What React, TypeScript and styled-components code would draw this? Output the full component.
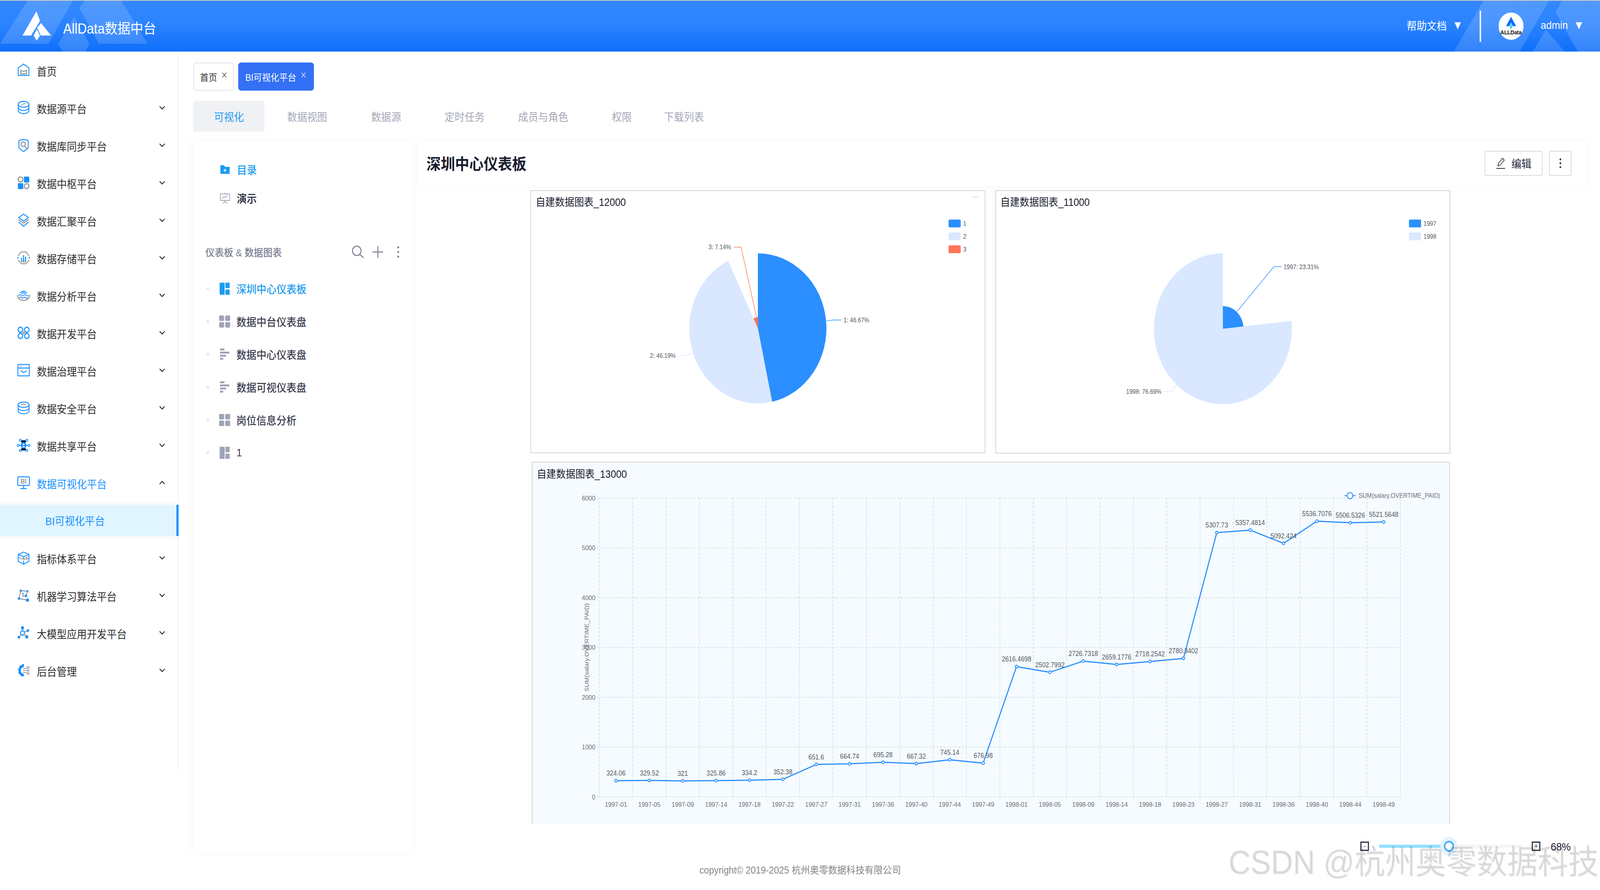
import React from "react";
import styled, { createGlobalStyle } from "styled-components";

const FONT = `"Liberation Sans", "Noto Sans CJK SC", sans-serif`;
const B = "#1890ff";
const G = "#999";

const Global = createGlobalStyle`
  html, body { margin: 0; padding: 0; background: #fff; overflow: hidden; }
  body { font-family: ${FONT}; height: 2278px; }
  * { box-sizing: border-box; }
`;

const Page = styled.div`
  position: relative;
  width: 4480px;
  height: 2278px;
  display: flex;
  flex-direction: column;
  overflow: hidden;
  background: #fff;
  transform-origin: 0 0;
`;

/* ---------- header ---------- */
const Header = styled.header`
  position: relative;
  flex: none;
  height: 132px;
  border-top: 2px solid #c9c9c9;
  background: linear-gradient(180deg, #3288ff 0%, #2b83ff 45%, #0f6ffa 100%);
  display: flex;
  align-items: center;
  justify-content: space-between;
  color: #fff;
  overflow: hidden;
`;
const HeaderDecor = styled.svg`
  position: absolute;
  left: 0;
  top: -2px;
  width: 4480px;
  height: 132px;
`;
const Brand = styled.div`
  position: relative;
  display: flex;
  align-items: center;
  padding-left: 60px;
`;
const BrandName = styled.div`
  font-size: 36px;
  margin-left: 31px;
  margin-top: 6px;
`;
const HeaderRight = styled.div`
  position: relative;
  display: flex;
  align-items: center;
  padding-right: 50px;
  font-size: 28px;
`;
const HeaderLink = styled.span`
  margin-top: -4px;
`;
const Caret = styled.i`
  display: block;
  width: 18px;
  height: 18px;
  margin: -2px 0 0 ${(p: { $ml: number }) => p.$ml}px;
  background: #fff;
  clip-path: polygon(0 0, 100% 0, 50% 100%);
`;
const HeaderRule = styled.div`
  width: 4px;
  height: 80px;
  background: #fff;
  margin: 0 49px 0 52px;
`;
const Avatar = styled.svg`
  width: 70px;
  height: 70px;
  flex: none;
  margin-right: 48px;
`;

/* ---------- layout ---------- */
const Body = styled.div`
  flex: 1;
  display: flex;
  min-height: 0;
`;
const Sidebar = styled.nav`
  flex: none;
  width: 500px;
  height: 1840px;
  border-right: 2px solid #f0f0f0;
`;
const MenuRow = styled.div<{ $active?: boolean }>`
  height: 96px;
  display: flex;
  align-items: center;
  padding-left: 48px;
  font-size: 28px;
  color: ${(p) => (p.$active ? B : "#2e2e2e")};
`;
const MenuLabel = styled.span`
  margin-left: 19px;
  flex: 1;
  margin-top: 4px;
`;
const MenuChevron = styled.svg`
  width: 16px;
  height: 9px;
  margin-right: 36px;
  margin-top: -2px;
  flex: none;
`;
const MenuIcon = styled.svg`
  width: 36px;
  height: 36px;
  flex: none;
  overflow: visible;
`;
const SubWrap = styled.div`
  height: 96px;
  padding: 8px 0;
  background: #fafafa;
`;
const SubItem = styled.div`
  height: 80px;
  background: #e0f5ff;
  border-right: 6px solid ${B};
  margin-right: -2px;
  display: flex;
  align-items: center;
  padding-left: 127px;
  color: ${B};
  font-size: 28px;
`;
const Main = styled.main`
  flex: 1;
  min-width: 0;
  padding: 28px 0 0 41px;
  display: flex;
  flex-direction: column;
`;

/* ---------- tags + tabs ---------- */
const TagBar = styled.div`
  display: flex;
  gap: 12px;
  height: 72px;
  flex: none;
`;
const Tag = styled.div<{ $active?: boolean }>`
  height: 72px;
  display: flex;
  align-items: center;
  padding: 0 ${(p) => (p.$active ? 20 : 18)}px 0 ${(p) => (p.$active ? 18 : 17)}px;
  border-radius: 8px;
  font-size: 24px;
  border: 2px solid ${(p) => (p.$active ? "#3370f5" : "#dfe3ea")};
  background: ${(p) => (p.$active ? "#3370f5" : "#fff")};
  color: ${(p) => (p.$active ? "#fff" : "#333")};
`;
const TagClose = styled.svg`
  width: 14px;
  height: 14px;
  margin: -8px 0 0 13px;
`;
const TabBar = styled.div`
  display: flex;
  flex: none;
  margin-top: 11px;
  padding-top: 15px;
  height: 98px;
  border-left: 1px solid #f0f0f0;
`;
const Tab = styled.div<{ $w: number; $active?: boolean }>`
  flex: none;
  width: ${(p) => p.$w}px;
  height: 79px;
  display: flex;
  align-items: center;
  justify-content: center;
  white-space: nowrap;
  font-size: 28px;
  border-radius: 6px 6px 0 0;
  background: ${(p) => (p.$active ? "#f0f1f5" : "transparent")};
  color: ${(p) => (p.$active ? "#1d9bf0" : "#a4a7b8")};
`;
const Workspace = styled.div`
  display: flex;
  flex: none;
  margin-top: 21px;
  gap: 15px;
`;

/* ---------- left panel ---------- */
const Panel = styled.aside`
  flex: none;
  width: 614px;
  height: 1818px;
  background: #fff;
  box-shadow: 0 0 26px 6px rgba(0, 0, 0, 0.025);
  padding: 54px 0 0 34px;
`;
const PanelLink = styled.div<{ $active?: boolean }>`
  display: flex;
  align-items: center;
  height: 36px;
  margin: 0 0 37px 41px;
  font-size: 28px;
  font-weight: 500;
  color: ${(p) => (p.$active ? "#1d9bf0" : "#1b1d30")};
`;
const PanelLinkIcon = styled.svg`
  width: 28px;
  height: 28px;
  margin-right: 19px;
  flex: none;
`;
const SectionHead = styled.div`
  display: flex;
  align-items: center;
  margin-top: 99px;
  height: 40px;
  color: #7a7d92;
  font-size: 26px;
  font-weight: 500;
`;
const SectionTitle = styled.span`
  flex: 1;
`;
const SectionTools = styled.svg`
  width: 150px;
  height: 40px;
  margin-right: 31px;
  flex: none;
`;
const Tree = styled.div`
  margin-top: 33px;
`;
const TreeRow = styled.div<{ $active?: boolean }>`
  height: 84px;
  display: flex;
  align-items: center;
  font-size: 28px;
  font-weight: 500;
  color: ${(p) => (p.$active ? "#1d9bf0" : "#3c3e50")};
`;
const TreeDot = styled.i`
  width: 8px;
  height: 8px;
  border-radius: 50%;
  background: #e8e9f2;
  margin: 0 27px 0 3px;
  flex: none;
`;
const TreeIcon = styled.svg`
  width: 32px;
  height: 32px;
  margin-right: 17px;
  flex: none;
`;

/* ---------- board ---------- */
const Board = styled.section`
  flex: none;
  width: 3270px;
  display: flex;
  flex-direction: column;
`;
const TitleBar = styled.div`
  height: 112px;
  flex: none;
  background: #fff;
  box-shadow: 0 0 26px 6px rgba(0, 0, 0, 0.025);
  display: flex;
  align-items: center;
  padding: 0 40px 0 24px;
`;
const BoardTitle = styled.h1`
  flex: 1;
  margin: 0 0 2px;
  font-size: 40px;
  font-weight: 700;
  color: #1b1d30;
`;
const ToolButton = styled.div<{ $w: number }>`
  width: ${(p) => p.$w}px;
  height: 64px;
  border: 2px solid #d9d9d9;
  border-radius: 4px;
  display: flex;
  align-items: center;
  justify-content: center;
  gap: 16px;
  margin-left: 18px;
  font-size: 28px;
  color: #2a2c40;
`;
const ToolIcon = styled.svg`
  width: 28px;
  height: 36px;
  flex: none;
`;
const DotsIcon = styled.svg`
  width: 10px;
  height: 36px;
  flex: none;
`;
const Canvas = styled.div`
  margin-top: 13px;
  padding-left: 315px;
  display: flex;
  flex-direction: column;
  gap: 21px;
  position: relative;
`;
const ChartRow = styled.div`
  display: flex;
  gap: 28px;
`;
const ChartCard = styled.div<{ $tint?: boolean; $w: number; $h: number; $open?: boolean }>`
  width: ${(p) => p.$w}px;
  height: ${(p) => p.$h}px;
  margin-left: ${(p) => (p.$tint ? 4 : 0)}px;
  background: ${(p) => (p.$tint ? "#f5fbff" : "#fff")};
  border: 2px solid #d2d4d6;
  border-bottom-width: ${(p) => (p.$open ? 0 : 2)}px;
  flex: none;
  position: relative;
`;
const CardDots = styled.span`
  position: absolute;
  right: 18px;
  top: 2px;
  font-size: 16px;
  letter-spacing: 1px;
  color: ${B};
`;
const ChartTitle = styled.div<{ $h: number; $pl: number }>`
  height: ${(p) => p.$h}px;
  padding-left: ${(p) => p.$pl}px;
  display: flex;
  align-items: center;
  font-size: 27px;
  color: #1b1d30;
`;
const ChartSvg = styled.svg`
  display: block;
`;
const LabelText = styled.text`
  font-family: "Liberation Sans", sans-serif;
  font-size: 16px;
  fill: #555a63;
`;
const TickText = styled.text<{ $size?: number }>`
  font-family: "Liberation Sans", sans-serif;
  font-size: ${(p) => p.$size ?? 17}px;
  fill: #6e7079;
`;
const ValueText = styled.text`
  font-family: "Liberation Sans", sans-serif;
  font-size: 17.5px;
  fill: #555a63;
  text-anchor: middle;
`;

/* ---------- zoom bar + footer ---------- */
const ZoomBar = styled.div`
  margin-top: 41px;
  height: 30px;
  padding-right: 40px;
  display: flex;
  align-items: center;
  justify-content: flex-end;
  font-size: 28px;
  color: #1b1d30;
`;
const ZoomBtn = styled.div`
  width: 24px;
  height: 24px;
  border: 3px solid #2a2c40;
  display: flex;
  align-items: center;
  justify-content: center;
  font-size: 18px;
  line-height: 1;
  flex: none;
`;
const Slider = styled.div`
  position: relative;
  width: 400px;
  height: 8px;
  margin: 0 28px;
  background: #f5f5f5;
  border-radius: 4px;
  flex: none;
`;
const SliderFill = styled.div<{ $pct: number }>`
  width: ${(p) => p.$pct}%;
  height: 100%;
  background: #91dfff;
  border-radius: 4px;
`;
const SliderThumb = styled.div<{ $pct: number }>`
  position: absolute;
  top: 50%;
  left: ${(p) => p.$pct}%;
  width: 28px;
  height: 28px;
  margin: -14px 0 0 -14px;
  border-radius: 50%;
  background: #fff;
  border: 4px solid #40a9f5;
  box-shadow: 0 0 0 10px #e3f2ff;
`;
const ZoomValue = styled.span`
  margin-left: 29px;
  width: 58px;
  margin-top: 4px;
`;
const Footer = styled.footer`
  margin-top: 30px;
  padding-right: 540px;
  text-align: center;
  font-size: 25.5px;
  line-height: 32px;
  color: #888;
`;
const Watermark = styled.div`
  position: absolute;
  right: 4px;
  top: 2157px;
  font-size: 85.5px;
  line-height: 100px;
  white-space: nowrap;
  color: rgba(0, 0, 0, 0.1);
  text-shadow: 2px 2px 1px rgba(0, 0, 0, 0.06);
  pointer-events: none;
`;

/* ---------- sidebar icons ---------- */
const sw = { fill: "none", strokeWidth: 2.4, strokeLinejoin: "round", strokeLinecap: "round" } as const;

const icons: Record<string, React.ReactNode> = {
  home: (
    <>
      <path d="M18 2 L33 12 V31 H3 V12 Z" stroke={B} {...sw} />
      <path d="M10 18 L18 21 L26 18 V27 H10 Z" stroke={G} {...sw} strokeWidth={2.8} />
    </>
  ),
  db: (
    <>
      <ellipse cx="18" cy="9" rx="15" ry="7.5" stroke={B} {...sw} />
      <path d="M3 9 V25 C3 29 10 33 18 33 S33 29 33 25 V9 M3 17 C3 21 10 25 18 25 S33 21 33 17" stroke={B} {...sw} />
      <path d="M12 11 C15 11 15 8 18 8 S21 7 24 7" stroke={G} {...sw} strokeWidth={2} />
    </>
  ),
  shield: (
    <>
      <path d="M5 6 Q18 0 31 6 V25 L18 34 L5 25 Z" stroke={B} {...sw} />
      <circle cx="17" cy="15" r="6" stroke={G} {...sw} strokeWidth={3} />
      <path d="M21 20 L27 26" stroke={G} {...sw} strokeWidth={3} />
    </>
  ),
  four: (
    <>
      <circle cx="9.5" cy="9.5" r="6.5" stroke={G} {...sw} strokeWidth={3} />
      <path d="M19 2 H31 Q34 2 34 5 V17 H19 Z" fill={B} />
      <path d="M2 19 H17 V34 H5 Q2 34 2 31 Z" fill={B} />
      <circle cx="26.5" cy="26.5" r="6.5" stroke={G} {...sw} strokeWidth={3} />
    </>
  ),
  layers: (
    <>
      <path d="M18 2 L32 11 L18 20 L4 11 Z" stroke={B} {...sw} />
      <path d="M5 17 L18 25 L31 17" stroke={G} {...sw} strokeWidth={2.8} />
      <path d="M5 23 L18 33 L31 23" stroke={B} {...sw} />
    </>
  ),
  storage: (
    <>
      <path d="M3 13 L11 3 H25 L33 13 M33 24 L25 33 H11 L3 24" stroke={G} {...sw} />
      <path d="M12 28 H24" stroke={G} {...sw} />
      <path d="M11 18 h3 v9 h-3z M16.5 11 h3 v16 h-3z M22 15 h3 v12 h-3z" fill={B} />
      <circle cx="2" cy="18" r="2" fill={B} />
      <circle cx="34" cy="18" r="2" fill={B} />
    </>
  ),
  analysis: (
    <>
      <path d="M9 12 Q18 3 27 12 M13 14 Q18 9 23 14" stroke={B} {...sw} />
      <path d="M4 18 q3.5 -3 7 0 t7 0 t7 0 t7 0 M7 24 q3 -3 5.5 0 t5.5 0 t5.5 0 t5.5 0" stroke={B} {...sw} strokeWidth={2} />
      <path d="M1 18 Q3 31 18 31 Q33 31 35 18" stroke={G} {...sw} strokeWidth={2.6} />
    </>
  ),
  dev: (
    <>
      <circle cx="9" cy="10" r="6.5" stroke={B} {...sw} strokeWidth={2.8} />
      <circle cx="27" cy="10" r="6.5" stroke={B} {...sw} strokeWidth={2.8} />
      <circle cx="9" cy="26" r="6.5" stroke={B} {...sw} strokeWidth={2.8} />
      <circle cx="27" cy="26" r="6.5" stroke={B} {...sw} strokeWidth={2.8} />
      <path d="M18 14 V22 M14 18 H22" stroke={G} {...sw} />
    </>
  ),
  govern: (
    <>
      <rect x="2" y="3" width="32" height="29" stroke={B} {...sw} />
      <path d="M2 12 H34" stroke={B} {...sw} />
      <path d="M6 7.5 H16" stroke={G} strokeWidth={2} strokeDasharray="3 1.4" />
      <path d="M11 19 L18 24 L26 19" stroke={B} {...sw} />
    </>
  ),
  safe: (
    <>
      <ellipse cx="18" cy="10" rx="15.5" ry="7" stroke={B} {...sw} />
      <path d="M2.5 10 V26 C2.5 30 10 33 18 33 S33.5 30 33.5 26 V10 M2.5 18 C2.5 22 10 25 18 25 S33.5 22 33.5 18" stroke={B} {...sw} />
      <path d="M11 11 L18 7.5 L25 11" stroke={G} {...sw} strokeWidth={2} />
    </>
  ),
  share: (
    <>
      <path d="M9 5 L18 18 L27 5 M3 18 H33 M9 31 L18 18 L27 31" stroke={B} strokeWidth={1.8} />
      <circle cx="18" cy="18" r="8" fill={B} />
      <circle cx="18" cy="15.5" r="2.6" fill="#fff" />
      <path d="M13 23 Q18 17 23 23 Z" fill="#fff" />
      {[[9, 5], [27, 5], [3, 18], [33, 18], [9, 31], [27, 31]].map(([x, y]) => (
        <circle key={`${x}-${y}`} cx={x} cy={y} r="2.8" fill="#fff" stroke={B} strokeWidth={2} />
      ))}
    </>
  ),
  bi: (
    <>
      <rect x="1.5" y="2.5" width="33" height="22" rx="3" stroke={B} {...sw} strokeWidth={2.6} />
      <text x="18" y="20" textAnchor="middle" fontFamily="Liberation Sans" fontWeight="700" fontSize="17" fill={G}>
        BI
      </text>
      <path d="M18 25 V32 M10 32.5 H26" stroke={B} {...sw} strokeWidth={2.6} />
    </>
  ),
  cube: (
    <>
      <path d="M18 3 L33 9 V27 L18 34 L3 27 V9 Z" stroke={B} {...sw} />
      <path d="M3 9 L18 15 L33 9 M18 15 V19 M18 26 V34" stroke={B} {...sw} />
      <path d="M6 17 Q12 23 30 20 L25 16" stroke={G} {...sw} />
    </>
  ),
  ml: (
    <>
      <path d="M10 6 L29 7 L25 19 L16 20 V13 M10 6 L5 26 L29 30" stroke={G} {...sw} />
      <circle cx="10" cy="6" r="3" fill={B} />
      <circle cx="29" cy="7" r="2.6" fill={B} />
      <circle cx="25" cy="19" r="3.2" fill={B} />
      <circle cx="16" cy="13" r="2" fill={B} />
      <circle cx="5" cy="26" r="3.2" fill={B} />
      <circle cx="29" cy="30" r="4.2" fill={B} />
    </>
  ),
  llm: (
    <>
      <path d="M15 18 L15 5 M15 18 L30 12 M15 18 L5 29 M15 18 L27 28" stroke={G} {...sw} strokeWidth={2.6} />
      <circle cx="15" cy="18" r="5.5" fill="#fff" stroke={B} strokeWidth={2.8} />
      <circle cx="15" cy="5" r="4.2" fill={B} />
      <circle cx="30" cy="12" r="3.4" fill={B} />
      <circle cx="5" cy="29" r="3.6" fill={B} />
      <circle cx="27" cy="28" r="4.4" fill={B} />
    </>
  ),
  gear: (
    <>
      <path d="M19 6 A12 12 0 0 0 19 30" fill="none" stroke={B} strokeWidth={6} />
      <path d="M19 3.5 A14.5 14.5 0 0 0 19 32.5" fill="none" stroke={B} strokeWidth={4} strokeDasharray="5 4" />
      <path d="M17 13 H24 L28 10 M17 18 H28 M17 23 H24 L28 26" stroke={G} {...sw} strokeWidth={2} />
      <circle cx="31" cy="10" r="2.6" fill="#fff" stroke={G} strokeWidth={1.8} />
      <circle cx="31" cy="18" r="2.6" fill="#fff" stroke={G} strokeWidth={1.8} />
      <circle cx="31" cy="26" r="2.6" fill="#fff" stroke={G} strokeWidth={1.8} />
    </>
  ),
};

const menu: { icon: string; label: string; chev?: boolean; active?: boolean; sub?: string }[] = [
  { icon: "home", label: "首页" },
  { icon: "db", label: "数据源平台", chev: true },
  { icon: "shield", label: "数据库同步平台", chev: true },
  { icon: "four", label: "数据中枢平台", chev: true },
  { icon: "layers", label: "数据汇聚平台", chev: true },
  { icon: "storage", label: "数据存储平台", chev: true },
  { icon: "analysis", label: "数据分析平台", chev: true },
  { icon: "dev", label: "数据开发平台", chev: true },
  { icon: "govern", label: "数据治理平台", chev: true },
  { icon: "safe", label: "数据安全平台", chev: true },
  { icon: "share", label: "数据共享平台", chev: true },
  { icon: "bi", label: "数据可视化平台", chev: true, active: true, sub: "BI可视化平台" },
  { icon: "cube", label: "指标体系平台", chev: true },
  { icon: "ml", label: "机器学习算法平台", chev: true },
  { icon: "llm", label: "大模型应用开发平台", chev: true },
  { icon: "gear", label: "后台管理", chev: true },
];

const Close = () => (
  <TagClose viewBox="0 0 14 14">
    <path d="M1.5 1 L12.5 13 M12.5 1 L1.5 13" stroke="currentColor" strokeWidth="1.3" fill="none" />
  </TagClose>
);

/* ---------- tree icons ---------- */
const TreeGlyph = ({ kind, color }: { kind: "layout" | "grid" | "bars"; color: string }) => (
  <TreeIcon viewBox="0 0 32 32">
    {kind === "layout" && (
      <>
        <rect x="2" y="0.5" width="14" height="31" rx="1" fill={color} />
        <rect x="18" y="0.5" width="12" height="14" rx="1" fill={color} />
        <rect x="18" y="18" width="12" height="13.5" rx="1" fill={color} />
      </>
    )}
    {kind === "grid" && (
      <>
        <rect x="0.5" y="0.5" width="14" height="14" rx="3" fill={color} />
        <rect x="17.5" y="0.5" width="14" height="14" rx="3" fill={color} />
        <rect x="0.5" y="17.5" width="14" height="14" rx="3" fill={color} />
        <rect x="17.5" y="17.5" width="14" height="14" rx="3" fill={color} />
      </>
    )}
    {kind === "bars" && (
      <>
        <rect x="3" y="1" width="12.5" height="5" fill={color} />
        <rect x="3" y="9" width="26" height="5" fill={color} />
        <rect x="3" y="17" width="17" height="5" fill={color} />
        <rect x="3" y="25" width="9" height="5" fill={color} />
      </>
    )}
  </TreeIcon>
);

const tree: { label: string; kind: "layout" | "grid" | "bars"; active?: boolean }[] = [
  { label: "深圳中心仪表板", kind: "layout", active: true },
  { label: "数据中台仪表盘", kind: "grid" },
  { label: "数据中心仪表盘", kind: "bars" },
  { label: "数据可视仪表盘", kind: "bars" },
  { label: "岗位信息分析", kind: "grid" },
  { label: "1", kind: "layout" },
];

/* ---------- charts ---------- */
const slice = (cx: number, cy: number, r: number, a0: number, a1: number) => {
  const p = (a: number) => {
    const t = ((a - 90) * Math.PI) / 180;
    return `${(cx + r * Math.cos(t)).toFixed(2)} ${(cy + r * Math.sin(t)).toFixed(2)}`;
  };
  return `M${cx} ${cy} L${p(a0)} A${r} ${r} 0 ${a1 - a0 > 180 ? 1 : 0} 1 ${p(a1)} Z`;
};

const BLUE = "#2b8fff";
const PALE = "#d9e8ff";
const RED = "#ff7558";

const Legend = ({ x, items }: { x: number; items: [string, string, number][] }) => (
  <>
    {items.map(([c, t, y]) => (
      <g key={t}>
        <rect x={x} y={y - 10} width="34" height="20" rx="3" fill={c} />
        <LabelText x={x + 41} y={y + 6}>
          {t}
        </LabelText>
      </g>
    ))}
  </>
);

const PieOne = () => (
  <ChartSvg width={1270} height={617} viewBox="1487 541 1270 617">
    <Legend x={2656} items={[[BLUE, "1", 572], [PALE, "2", 605], [RED, "3", 638]]} />
    <path d={slice(2122, 840.5, 192, 0, 168)} fill={BLUE} />
    <path d={slice(2122, 840.5, 192, 168, 334.3)} fill={PALE} />
    <path d={slice(2122, 840.5, 28.5, 334.3, 360)} fill={RED} />
    <path d="M2315 821 L2335 819 H2356" fill="none" stroke={BLUE} strokeWidth="1.5" />
    <path d="M1941 903 L1919.5 910 H1900" fill="none" stroke={PALE} strokeWidth="1.5" />
    <path d="M2119 815 L2075 632.5 H2055" fill="none" stroke={RED} strokeWidth="1.5" />
    <LabelText x="2362" y="825">1: 46.67%</LabelText>
    <LabelText x="1892" y="916" textAnchor="end">2: 46.19%</LabelText>
    <LabelText x="2047" y="638" textAnchor="end">3: 7.14%</LabelText>
  </ChartSvg>
);

const PieTwo = () => (
  <ChartSvg width={1270} height={618} viewBox="2789 541 1270 618">
    <Legend x={3945} items={[[BLUE, "1997", 572], [PALE, "1998", 605]]} />
    <path d={slice(3424, 841.5, 193, 84, 360)} fill={PALE} />
    <path d={slice(3424, 841.5, 58, 0, 84)} fill={BLUE} />
    <path d="M3463 798 L3567 682.6 H3588" fill="none" stroke={BLUE} strokeWidth="1.5" />
    <path d="M3294 986 L3281.5 1001.7 H3260" fill="none" stroke={PALE} strokeWidth="1.5" />
    <LabelText x="3594" y="688.6">1997: 23.31%</LabelText>
    <LabelText x="3252" y="1007.7" textAnchor="end">1998: 76.69%</LabelText>
  </ChartSvg>
);

const series: [string, number][] = [
  ["1997-01", 324.06], ["1997-05", 329.52], ["1997-09", 321], ["1997-14", 325.86],
  ["1997-18", 334.2], ["1997-22", 352.38], ["1997-27", 651.6], ["1997-31", 664.74],
  ["1997-36", 695.28], ["1997-40", 667.32], ["1997-44", 745.14], ["1997-49", 676.98],
  ["1998-01", 2616.4698], ["1998-05", 2502.7992], ["1998-09", 2726.7318], ["1998-14", 2659.1776],
  ["1998-18", 2718.2542], ["1998-23", 2780.3402], ["1998-27", 5307.73], ["1998-31", 5357.4814],
  ["1998-36", 5092.424], ["1998-40", 5536.7076], ["1998-44", 5506.5326], ["1998-49", 5521.5648],
];
const X0 = 1678;
const STEP = 93.46;
const Y0 = 2038.6;
const px = (i: number) => X0 + STEP * (i + 0.5);
const py = (v: number) => Y0 - v * 0.12743;

const LineChart = () => (
  <ChartSvg width={2567} height={872} viewBox="1491 1237 2567 872">
    {[0, 1000, 2000, 3000, 4000, 5000, 6000].map((v) => (
      <g key={v}>
        <line x1={X0 - 6} x2={X0 + STEP * 24} y1={py(v)} y2={py(v)} stroke="#d4d9de" strokeWidth="1.6" strokeDasharray="6 4" />
        <TickText x={1667} y={py(v) + 6} textAnchor="end">
          {v}
        </TickText>
      </g>
    ))}
    {Array.from({ length: 25 }, (_, i) => (
      <line key={i} x1={X0 + STEP * i} x2={X0 + STEP * i} y1={py(6000)} y2={Y0 + 6} stroke="#d4d9de" strokeWidth="1.6" strokeDasharray="6 4" />
    ))}
    <polyline
      points={series.map(([, v], i) => `${px(i)},${py(v)}`).join(" ")}
      fill="none"
      stroke={BLUE}
      strokeWidth="3"
      strokeLinejoin="round"
    />
    {series.map(([t, v], i) => (
      <g key={t}>
        <circle cx={px(i)} cy={py(v)} r="3.6" fill="#fff" stroke={BLUE} strokeWidth="2.2" />
        <ValueText x={px(i)} y={py(v) - 13}>
          {v}
        </ValueText>
        <TickText x={px(i)} y={2064} textAnchor="middle">
          {t}
        </TickText>
      </g>
    ))}
    <TickText $size={16.4} x={0} y={0} transform="translate(1648 1656) rotate(-90)" textAnchor="middle">
      SUM(salary.OVERTIME_PAID)
    </TickText>
    <line x1="3764" x2="3796" y1="1267.6" y2="1267.6" stroke={BLUE} strokeWidth="2.4" />
    <circle cx="3780" cy="1267.6" r="8" fill="#fff" stroke={BLUE} strokeWidth="2.4" />
    <TickText $size={16.6} x="3804" y="1273.5">
      SUM(salary.OVERTIME_PAID)
    </TickText>
  </ChartSvg>
);

export default function App() {
  const fit = `scaleX(${window.innerWidth / 4480})`;
  return (
    <Page style={{ transform: fit }}>
      <Global />
      <Header>
        <HeaderDecor viewBox="0 0 4480 132">
          <g fill="#fff" fillOpacity="0.15">
            <path d="M77 2 H203 L136 112 H0 Z" />
            <path d="M222 20 L237 2 H340 L413 112 H277 Z" />
            <path d="M208 42 L250 112 L239 132 H176 L163 112 Z" />
            <path d="M4153 2 H4337 L4255 132 H4071 Z" />
            <path d="M4373 2 H4480 V132 H4418 L4356 32 Z" />
            <path d="M4328 76 L4381 132 H4292 Z" />
          </g>
        </HeaderDecor>
        <Brand>
          <svg width="86" height="80" viewBox="60 20 86 80">
            <g fill="#fff">
              <path d="M102 22 L112 46 L87 84 H63 Z" />
              <path d="M115 52 L143 84 H114 L104 64 Z" />
              <path d="M103 68 L112 84 L103 97 L94 84 Z" />
            </g>
          </svg>
          <BrandName>AllData数据中台</BrandName>
        </Brand>
        <HeaderRight>
          <HeaderLink>帮助文档</HeaderLink>
          <Caret $ml={22} />
          <HeaderRule />
          <Avatar viewBox="0 0 70 70">
            <circle cx="35" cy="35" r="35" fill="#fff" />
            <path d="M35 11 L49 35 H40 L35 26 L30 35 H21 Z" fill="#0a6cff" />
            <path d="M35 28 L39 36 L35 43 L31 36 Z" fill="#2fd9e6" />
            <text x="35" y="56" textAnchor="middle" fontFamily="Liberation Sans" fontWeight="700" fontSize="14.5" fill="#111">
              ALLData
            </text>
          </Avatar>
          <HeaderLink>admin</HeaderLink>
          <Caret $ml={22} />
        </HeaderRight>
      </Header>

      <Body>
        <Sidebar>
          {menu.map((m) => (
            <React.Fragment key={m.label}>
              <MenuRow $active={m.active}>
                <MenuIcon viewBox="0 0 36 36">{icons[m.icon]}</MenuIcon>
                <MenuLabel>{m.label}</MenuLabel>
                {m.chev && (
                  <MenuChevron viewBox="0 0 16 9">
                    <path d={m.active ? "M1 8 L8 1 L15 8" : "M1 1 L8 8 L15 1"} fill="none" stroke="#222" strokeWidth="2.4" />
                  </MenuChevron>
                )}
              </MenuRow>
              {m.sub && (
                <SubWrap>
                  <SubItem>{m.sub}</SubItem>
                </SubWrap>
              )}
            </React.Fragment>
          ))}
        </Sidebar>

        <Main>
          <TagBar>
            <Tag>
              首页
              <Close />
            </Tag>
            <Tag $active>
              BI可视化平台
              <Close />
            </Tag>
          </TagBar>
          <TabBar>
            <Tab $w={198} $active>可视化</Tab>
            <Tab $w={240}>数据视图</Tab>
            <Tab $w={202}>数据源</Tab>
            <Tab $w={238}>定时任务</Tab>
            <Tab $w={202}>成员与角色</Tab>
            <Tab $w={238}>权限</Tab>
            <Tab $w={110}>下载列表</Tab>
          </TabBar>
          <Workspace>
            <Panel>
              <PanelLink $active>
                <PanelLinkIcon viewBox="0 0 28 28">
                  <path d="M1 3 H11 L14 7 H27 V25 H1 Z" fill="#1d9bf0" />
                  <path d="M14 12 V20 M10 16 H18" stroke="#fff" strokeWidth="2" />
                </PanelLinkIcon>
                目录
              </PanelLink>
              <PanelLink>
                <PanelLinkIcon viewBox="0 0 28 28">
                  <path d="M14 0 V3 M1 3.5 H27 V20 H1 Z M14 20 V23 M8 28 L14 23 L20 28" fill="none" stroke="#a0a4b8" strokeWidth="2" />
                  <path d="M6 16 L11 10 L15 13 L21 7" fill="none" stroke="#a0a4b8" strokeWidth="1.8" />
                </PanelLinkIcon>
                演示
              </PanelLink>
              <SectionHead>
                <SectionTitle>仪表板 &amp; 数据图表</SectionTitle>
                <SectionTools viewBox="0 0 150 40">
                  <circle cx="25" cy="18" r="12" fill="none" stroke="#7a7d92" strokeWidth="2.6" />
                  <path d="M33 27 L44 36" stroke="#7a7d92" strokeWidth="2.6" />
                  <path d="M84 6 V36 M69 21 H99" stroke="#7a7d92" strokeWidth="2.6" />
                  <circle cx="141" cy="9" r="2.6" fill="#7a7d92" />
                  <circle cx="141" cy="21" r="2.6" fill="#7a7d92" />
                  <circle cx="141" cy="33" r="2.6" fill="#7a7d92" />
                </SectionTools>
              </SectionHead>
              <Tree>
                {tree.map((t) => (
                  <TreeRow key={t.label} $active={t.active}>
                    <TreeDot />
                    <TreeGlyph kind={t.kind} color={t.active ? "#1d9bf0" : "#a0a4b8"} />
                    {t.label}
                  </TreeRow>
                ))}
              </Tree>
            </Panel>

            <Board>
              <TitleBar>
                <BoardTitle>深圳中心仪表板</BoardTitle>
                <ToolButton $w={162}>
                  <ToolIcon viewBox="0 0 28 36">
                    <path d="M6 25 L8 17 L19 5 L24 10 L13 22 Z" fill="none" stroke="#2a2c40" strokeWidth="1.8" strokeLinejoin="round" />
                    <path d="M2 31 H26" stroke="#2a2c40" strokeWidth="2.2" />
                  </ToolIcon>
                  编辑
                </ToolButton>
                <ToolButton $w={63}>
                  <DotsIcon viewBox="0 0 10 36">
                    <circle cx="5" cy="8" r="2.4" fill="#2a2c40" />
                    <circle cx="5" cy="18" r="2.4" fill="#2a2c40" />
                    <circle cx="5" cy="28" r="2.4" fill="#2a2c40" />
                  </DotsIcon>
                </ToolButton>
              </TitleBar>
              <Canvas>
                <ChartRow>
                  <ChartCard $w={1274} $h={673}>
                    <CardDots>...</CardDots>
                    <ChartTitle $h={52} $pl={13}>自建数据图表_12000</ChartTitle>
                    <PieOne />
                  </ChartCard>
                  <ChartCard $w={1274} $h={674}>
                    <ChartTitle $h={52} $pl={12}>自建数据图表_11000</ChartTitle>
                    <PieTwo />
                  </ChartCard>
                </ChartRow>
                <ChartCard $tint $open $w={2571} $h={928}>
                  <ChartTitle $h={54} $pl={12}>自建数据图表_13000</ChartTitle>
                  <LineChart />
                </ChartCard>
              </Canvas>
              <ZoomBar>
                <ZoomBtn>-</ZoomBtn>
                <Slider>
                  <SliderFill $pct={49} />
                  <SliderThumb $pct={49} />
                </Slider>
                <ZoomBtn>+</ZoomBtn>
                <ZoomValue>68%</ZoomValue>
              </ZoomBar>
            </Board>
          </Workspace>
          <Footer>copyright© 2019-2025 杭州奥零数据科技有限公司</Footer>
        </Main>
      </Body>
      <Watermark>CSDN @杭州奥零数据科技</Watermark>
    </Page>
  );
}
